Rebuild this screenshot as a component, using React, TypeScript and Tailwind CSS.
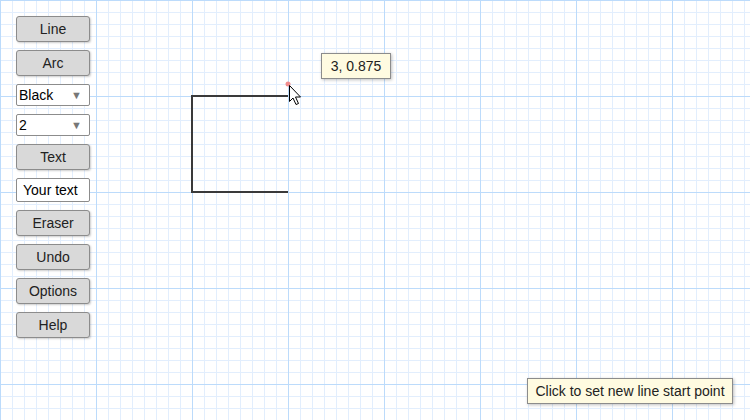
import React from "react";

const toolBtn =
  "h-[26px] w-[74px] rounded-[3px] border border-[#8c8c8c] bg-[#d9d9d9] text-[14px] text-[#222] shadow-[1px_1px_2px_rgba(0,0,0,0.2)] flex items-center justify-center";

const ToolButton = ({ label }: { label: string }) => <button className={toolBtn}>{label}</button>;

const FakeSelect = ({ value }: { value: string }) => (
  <div className="h-[22px] w-[74px] rounded-[2px] border border-[#8c8c8c] bg-white flex items-center justify-between pl-[2px] pr-[7px] text-[14px] text-black">
    <span>{value}</span>
    <span className="text-[11px] text-[#777]">▼</span>
  </div>
);

const App = () => {
  return (
    <div
      className="relative w-[750px] h-[420px] overflow-hidden bg-white font-['Liberation_Sans',Arial,sans-serif] [background-image:linear-gradient(to_right,#bcdbfb_1px,transparent_1px),linear-gradient(to_bottom,#bcdbfb_1px,transparent_1px),linear-gradient(to_right,#e2eefd_1px,transparent_1px),linear-gradient(to_bottom,#e2eefd_1px,transparent_1px)] [background-size:96px_96px,96px_96px,12px_12px,12px_12px]"
    >
      {/* drawing layer */}
      <svg className="absolute inset-0" width={750} height={420}>
        <polyline
          points="288,96 192,96 192,192 288,192"
          fill="none"
          stroke="#3a3a3a"
          strokeWidth={2}
        />
        <circle cx={288} cy={84} r={2.5} fill="#f08c8c" />
        {/* mouse pointer */}
        <path
          d="M289.5 85.5 L289.5 101.5 L293 98 L296 104.5 L298.5 103.5 L295.5 97 L300.5 97 Z"
          fill="#fff"
          stroke="#000"
          strokeWidth={1}
          strokeLinejoin="round"
        />
      </svg>

      <div className="relative flex flex-col gap-[8px] p-[16px] w-fit">
        <ToolButton label="Line" />
        <ToolButton label="Arc" />
        <FakeSelect value="Black" />
        <FakeSelect value="2" />
        <ToolButton label="Text" />
        <input
          className="h-[24px] w-[74px] rounded-[2px] border border-[#8c8c8c] bg-white px-[6px] text-[14px] text-black outline-none"
          defaultValue="Your text"
        />
        <ToolButton label="Eraser" />
        <ToolButton label="Undo" />
        <ToolButton label="Options" />
        <ToolButton label="Help" />
      </div>

      <div className="absolute left-[321px] top-[53px] h-[26px] w-[70px] border border-[#8c8c8c] bg-[#fffbe1] text-[14px] text-[#222] shadow-[1px_1px_3px_rgba(0,0,0,0.25)] flex items-center justify-center">
        3, 0.875
      </div>

      <div className="absolute left-[527px] top-[378px] h-[26px] w-[206px] border border-[#8c8c8c] bg-[#fffbe1] text-[14px] text-[#222] shadow-[1px_1px_3px_rgba(0,0,0,0.25)] flex items-center justify-center">
        Click to set new line start point
      </div>
    </div>
  );
};

export default App;
